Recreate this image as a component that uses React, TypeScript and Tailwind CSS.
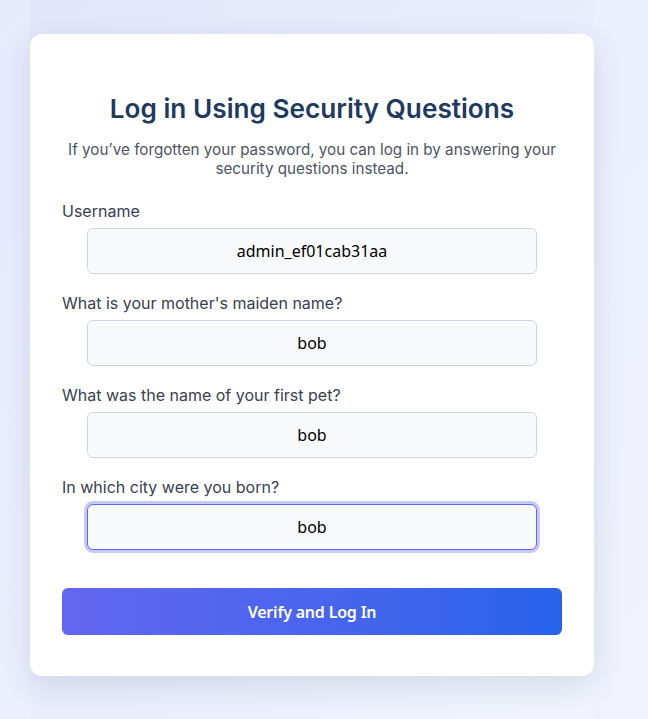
import React, { useState } from 'react';

const fields = [
  { id: 'username', label: 'Username', value: 'admin_ef01cab31aa' },
  { id: 'q1', label: "What is your mother's maiden name?", value: 'bob' },
  { id: 'q2', label: 'What was the name of your first pet?', value: 'bob' },
  { id: 'q3', label: 'In which city were you born?', value: 'bob', focused: true },
];

const App: React.FC = () => {
  const [values, setValues] = useState<Record<string, string>>(() =>
    Object.fromEntries(fields.map((f) => [f.id, f.value]))
  );

  return (
    <div className="min-h-screen w-full bg-gradient-to-br from-[#e7eafc] to-[#f0f3fd] font-['Inter',sans-serif]">
      <div className="ml-[30px] w-[564px] min-h-screen bg-gradient-to-br from-[#e1e6fb] via-[#e9edfc] to-[#f1f4fd] pt-[34px] pb-[44px]">
        <div className="bg-white rounded-xl shadow-[0_10px_30px_rgba(30,41,90,0.12)] px-8 pt-[59px] pb-[41px]">
          <h2 className="text-center text-[26.2px] leading-8 font-semibold text-[#1e3a5f]">
            Log in Using Security Questions
          </h2>
          <p className="mt-[15px] text-center text-[15.2px] leading-[19px] text-[#4b5563]">
            If you’ve forgotten your password, you can log in by answering your security questions instead.
          </p>

          <form className="mt-[21px]" onSubmit={(e) => e.preventDefault()}>
            {fields.map((f) => (
              <div key={f.id} className="mb-[17px]">
                <label htmlFor={f.id} className="block text-base leading-6 text-[#374151] mb-[5px]">
                  {f.label}
                </label>
                <input
                  id={f.id}
                  type="text"
                  value={values[f.id]}
                  onChange={(e) => setValues({ ...values, [f.id]: e.target.value })}
                  className={
                    f.focused
                      ? "block w-[450px] mx-auto h-[46px] rounded-md bg-[#f8f9fb] border border-[#6366f1] ring-[3px] ring-[#c7cbfb] text-center text-base text-black font-['Noto_Sans',sans-serif] outline-none"
                      : "block w-[450px] mx-auto h-[46px] rounded-md bg-[#f8f9fb] border border-[#d1d5db] text-center text-base text-black font-['Noto_Sans',sans-serif] outline-none"
                  }
                />
              </div>
            ))}
            <button
              type="submit"
              className="mt-[38px] block w-full h-[47px] rounded-md bg-gradient-to-r from-[#6366f1] to-[#2563eb] text-white text-base font-semibold font-['Noto_Sans',sans-serif] tracking-[-0.2px]"
            >
              Verify and Log In
            </button>
          </form>
        </div>
      </div>
    </div>
  );
};

export default App;
